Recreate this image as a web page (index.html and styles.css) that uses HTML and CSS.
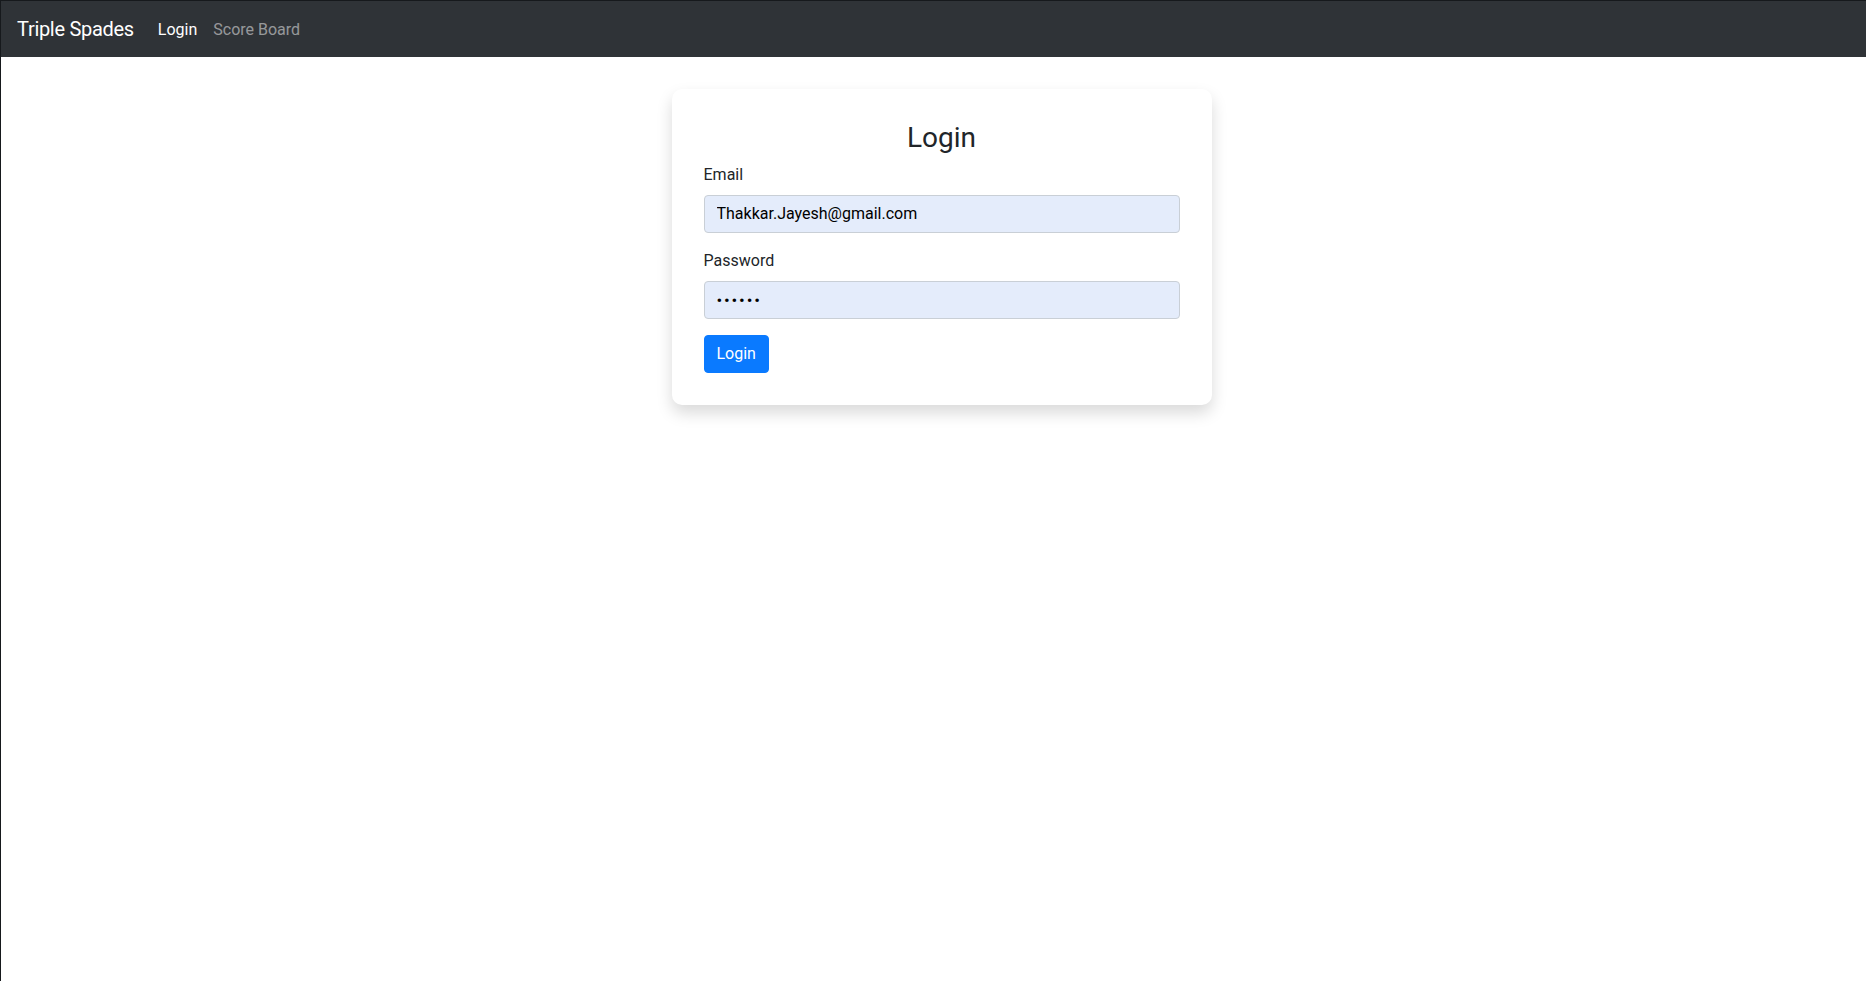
FILE: index.html
```html
<!DOCTYPE html>
<html lang="en">
<head>
<meta charset="utf-8">
<title>Triple Spades</title>
<link rel="stylesheet" href="styles.css">
</head>
<body>
<nav class="navbar">
  <a class="brand" href="#">Triple Spades</a>
  <ul class="nav">
    <li><a class="nav-link active" href="#">Login</a></li>
    <li><a class="nav-link" href="#">Score Board</a></li>
  </ul>
</nav>
<main class="main">
  <div class="card">
    <h3 class="card-title">Login</h3>
    <form class="form">
      <div class="form-group">
        <label class="label" for="email">Email</label>
        <input class="input" id="email" type="email" value="Thakkar.Jayesh@gmail.com">
      </div>
      <div class="form-group">
        <label class="label" for="password">Password</label>
        <input class="input input-password" id="password" type="password" value="123456">
      </div>
      <button class="btn" type="button">Login</button>
    </form>
  </div>
</main>
</body>
</html>
```
FILE: styles.css
```css
* { box-sizing: border-box; }
html, body { height: 100%; }
body {
  margin: 0;
  font-family: Roboto, "Noto Sans", "Liberation Sans", sans-serif;
  font-size: 16px;
  line-height: 1.5;
  color: #212529;
  background: #fff;
  border-left: 1px solid #16191c;
}
.navbar {
  display: flex;
  align-items: center;
  background: #2f3337;
  border-top: 1px solid #16191c;
  padding: 8px 16px;
  height: 57px;
}
.brand {
  font-size: 20px;
  line-height: 30px;
  padding: 5px 0;
  margin-right: 16px;
  color: #fff;
  text-decoration: none;
  letter-spacing: -0.3px;
}
.nav {
  display: flex;
  list-style: none;
  margin: 0;
  padding: 0;
}
.nav-link {
  display: block;
  padding: 9px 8px 7px;
  color: rgba(255,255,255,.5);
  text-decoration: none;
}
.nav-link.active { color: #fff; }
.main {
  display: flex;
  justify-content: center;
  padding: 32px 0 0 16px;
}
.card {
  width: 540px;
  background: #fff;
  border-radius: 10px;
  padding: 32px;
  box-shadow: 0 8px 16px rgba(0,0,0,.15);
}
.card-title {
  margin: 0 0 8px;
  font-size: 28px;
  font-weight: 400;
  line-height: 1.2;
  text-align: center;
}
.form-group { margin-bottom: 16px; display: flex; flex-direction: column; }
.label {
  margin-bottom: 8px;
  line-height: 24px;
}
.input {
  display: block;
  width: 100%;
  height: 38px;
  padding: 6px 12px;
  font-family: inherit;
  font-size: 16px;
  line-height: 24px;
  color: #000;
  background: #e4ecfb;
  border: 1px solid #c9cfd6;
  border-radius: 4px;
  outline: none;
}
.input-password {
  font-size: 17px;
  letter-spacing: 1.8px;
}
.btn {
  display: inline-block;
  height: 38px;
  padding: 6px 12px;
  font-family: inherit;
  font-size: 16px;
  line-height: 24px;
  color: #fff;
  background: #0a7aff;
  border: 1px solid #0a7aff;
  border-radius: 4px;
  cursor: pointer;
}
```
